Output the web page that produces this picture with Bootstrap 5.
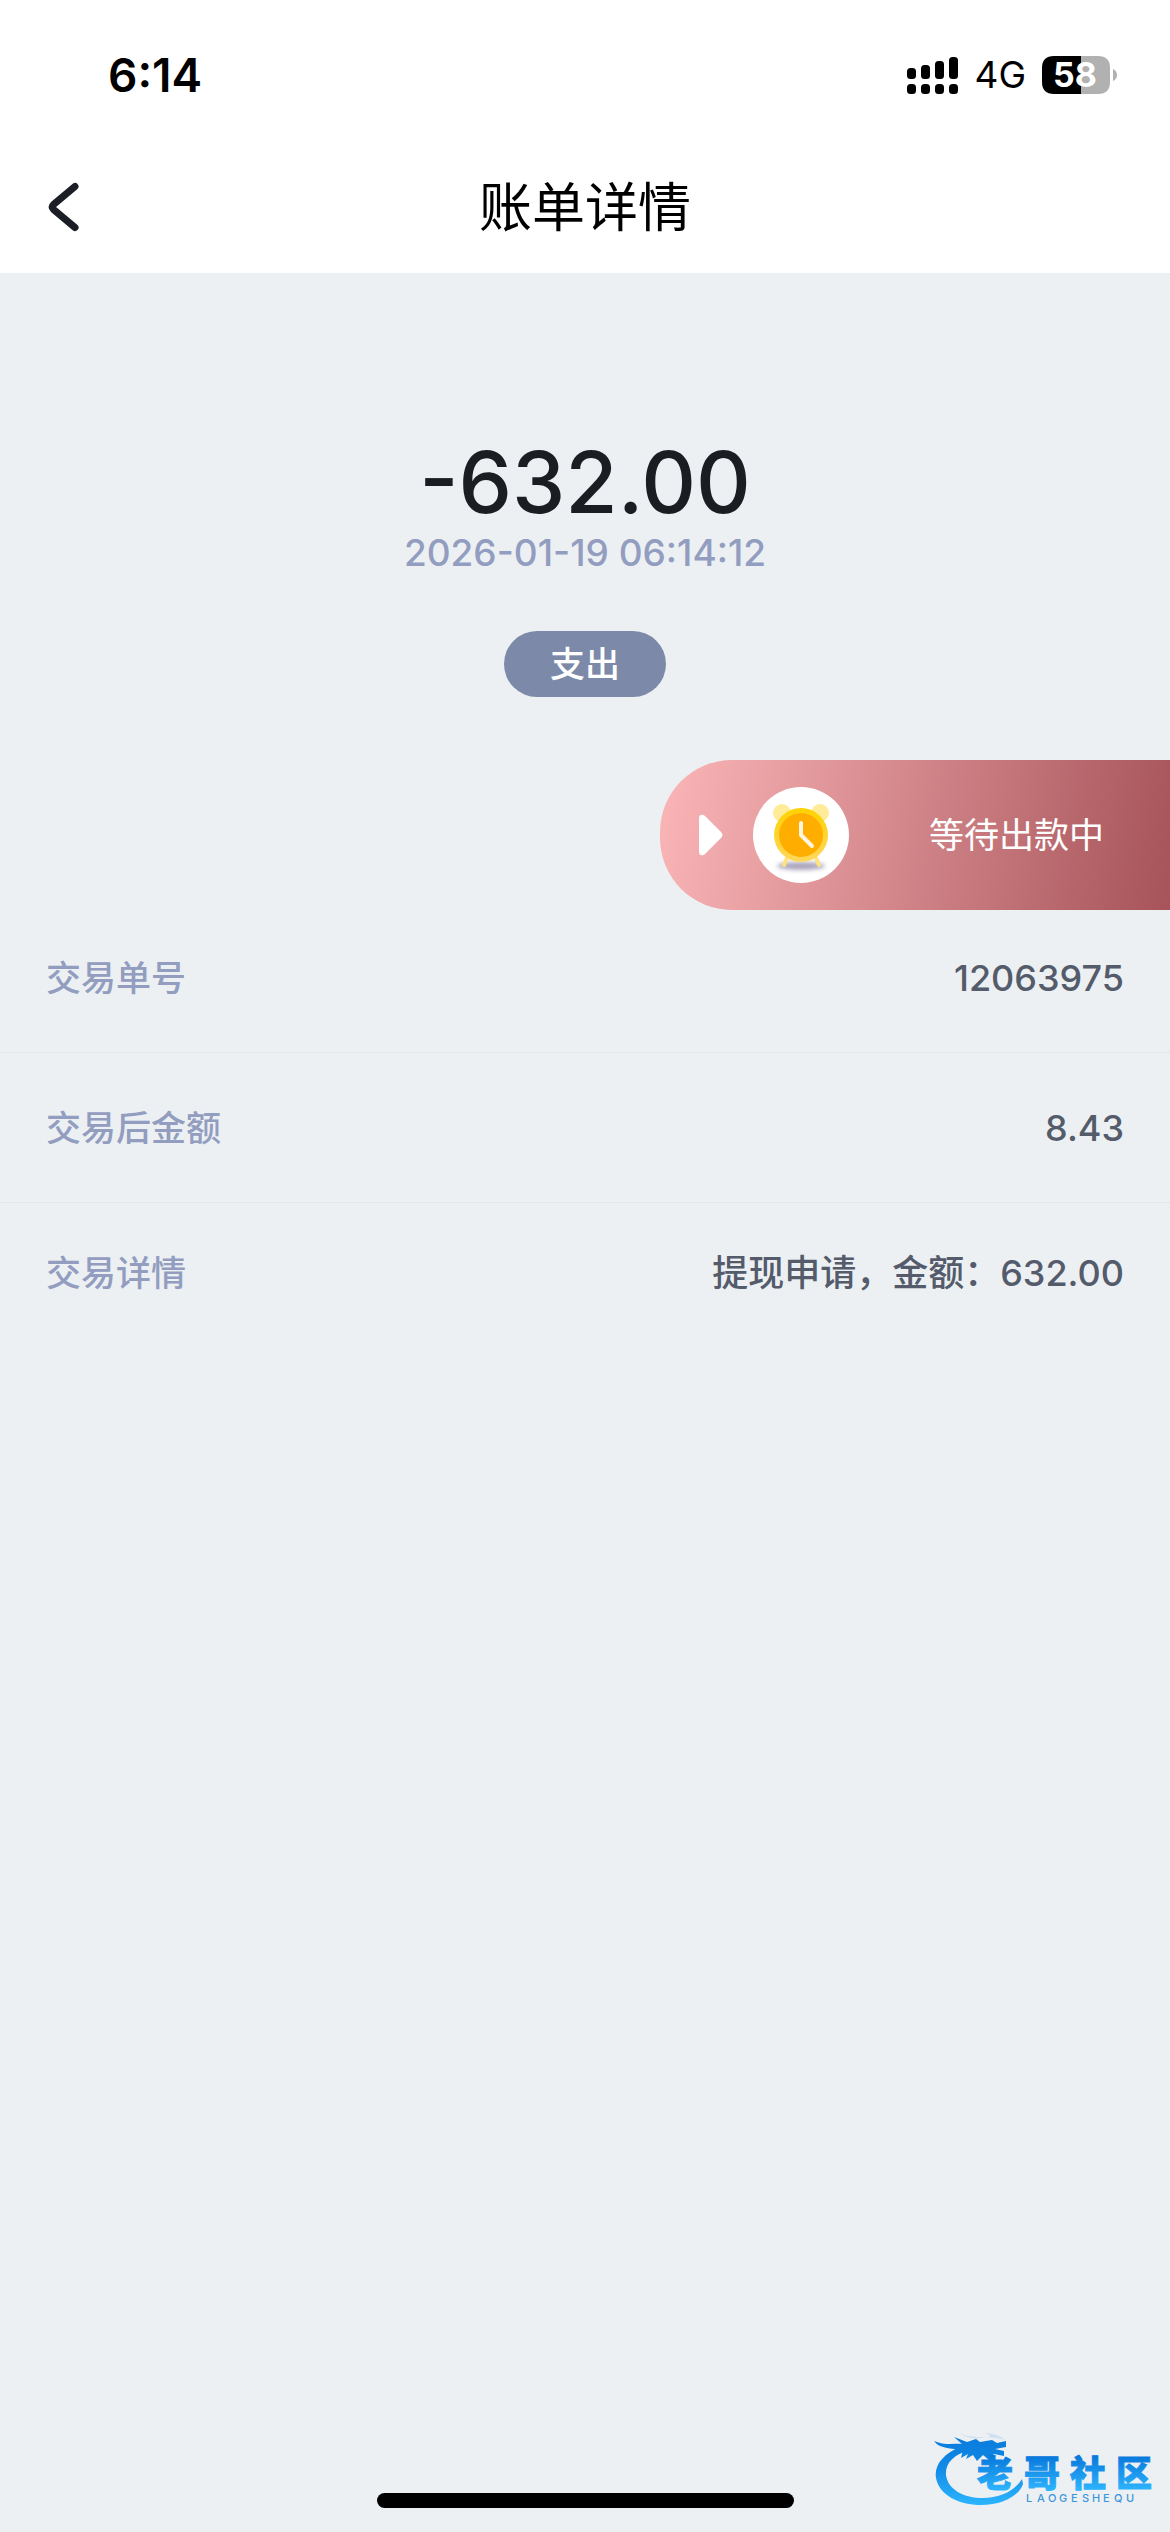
<!DOCTYPE html>
<html lang="zh-CN">
<head>
<meta charset="utf-8">
<meta name="viewport" content="width=device-width, initial-scale=1">
<title>账单详情</title>
<link href="https://cdn.jsdelivr.net/npm/bootstrap@5.3.0/dist/css/bootstrap.min.css" rel="stylesheet">
<style>
  body { font-family: Inter, "Noto Sans CJK SC", sans-serif; background: #ecf0f3; color: #1a1d21; font-size: 36px; line-height: 48px; }
  svg { display: block; flex: none; }
  .status-bar { height: 140px; padding: 0 52px 0 108px; color: #000; }
  .status-row { height: 150px; }
  .clock-time { font-size: 46px; font-weight: 600; }
  .carrier { font-size: 37px; }
  .title-bar { height: 133px; padding: 0 48px; }
  .title-bar h1 { font-size: 53px; line-height: 72px; font-weight: 400; color: #000; padding-top: 2px; }
  .title-bar a, .bar-side { width: 60px; }
  .summary { padding-top: 168px; }
  .amount { font-size: 85px; line-height: 84px; font-weight: 500; }
  .stamp { margin-top: 4px; color: #929dc0; font-size: 37px; font-weight: 500; }
  .kind { background: #7c89a8; width: 162px; height: 66px; margin-top: 54px; font-size: 35px; font-weight: 500; }
  .progress-tag { width: 510px; height: 150px; margin-top: 63px; margin-bottom: -7px; padding: 0 66px 0 39px; border-radius: 72px 0 0 72px; background: linear-gradient(100deg, #fbb6b8, #a65359); font-size: 35px; }
  .clock-disc { width: 96px; height: 96px; margin-left: 30px; }
  .entry { height: 150px; padding: 0 46px; border-bottom: 1px solid #e4e6e8; font-weight: 500; }
  .entry:last-child { height: 140px; border-bottom: 0; }
  .entry dt { color: #929dc0; font-size: 35px; font-weight: 500; }
  .entry dd { color: #545b6b; }
  .home-bar { width: 417px; height: 15px; margin-bottom: 24px; background: #000; }
  .watermark { right: 10px; bottom: 20px; }
</style>
</head>
<body class="d-flex flex-column min-vh-100 position-relative">
<header class="bg-white">
  <div class="status-bar">
    <div class="status-row d-flex align-items-center justify-content-between">
      <span class="clock-time">6:14</span>
      <div class="d-flex align-items-center">
        <svg width="51" height="37" viewBox="0 0 51 37" aria-label="信号">
          <rect x="0" y="11" width="9" height="11" rx="3.5"/><rect x="14" y="8" width="9" height="14" rx="3.5"/><rect x="28" y="4" width="9" height="18" rx="3.5"/><rect x="42" y="0" width="9" height="22" rx="3.5"/>
          <rect x="0" y="27" width="9" height="10" rx="3.5"/><rect x="14" y="27" width="9" height="10" rx="3.5"/><rect x="28" y="27" width="9" height="10" rx="3.5"/><rect x="42" y="27" width="9" height="10" rx="3.5"/>
        </svg>
        <span class="carrier ms-3 me-3">4G</span>
        <svg width="76" height="38" viewBox="0 0 76 38" aria-label="电量">
          <path d="M39 0H56Q68 0 68 12V26Q68 38 56 38H39Z" fill="#b1b1b1"/>
          <path d="M39 0H12Q0 0 0 12V26Q0 38 12 38H39Z"/>
          <path d="M71 13Q75 15 75 19T71 25Z" fill="#b1b1b1"/>
          <text x="33" y="31" text-anchor="middle" font-size="34" font-weight="700" fill="#fff">58</text>
        </svg>
      </div>
    </div>
  </div>
  <nav class="title-bar d-flex align-items-center justify-content-between" aria-label="导航">
    <a href="#" aria-label="返回"><svg width="31" height="50" viewBox="0 0 31 50" fill="none" stroke="#1b1e24" stroke-width="7" stroke-linecap="round" stroke-linejoin="round"><path d="M27 4.500L5.500 22.500Q3 25 5.500 27.500L27 45.500"/></svg></a>
    <h1 class="mb-0">账单详情</h1>
    <span class="bar-side"></span>
  </nav>
</header>
<main class="flex-grow-1">
  <section class="summary d-flex flex-column align-items-center">
    <div class="amount">-632.00</div>
    <time class="stamp" datetime="2026-01-19T06:14:12">2026-01-19 06:14:12</time>
    <span class="kind rounded-pill text-white d-flex align-items-center justify-content-center">支出</span>
  </section>
  <div class="progress-tag d-flex align-items-center ms-auto text-white">
    <svg width="24" height="42" viewBox="0 0 24 42" fill="#fff"><path d="M0 4C0 0 4 0 6 2L22 18Q25 21 22 24L6 40C4 42 0 42 0 38Z"/></svg>
    <span class="clock-disc bg-white rounded-circle d-flex">
      <svg width="96" height="96" viewBox="0 0 96 96">
        <defs>
          <linearGradient id="rim" x1="0" y1="0" x2="0" y2="1"><stop offset="0" stop-color="#ffd200"/><stop offset="1" stop-color="#ffd75c"/></linearGradient>
          <filter id="soft" x="-20%" y="-60%" width="140%" height="220%"><feGaussianBlur stdDeviation="2"/></filter>
        </defs>
        <ellipse cx="48" cy="79" rx="24" ry="4" fill="#aaa5bd" filter="url(#soft)"/>
        <circle cx="29" cy="26" r="9" fill="#ffeb98"/><circle cx="67" cy="26" r="9" fill="#ffeb98"/>
        <path d="M34 71l-3 7M63 71l3 7" stroke="#ffe27d" stroke-width="4" stroke-linecap="round"/>
        <circle cx="48" cy="48" r="27" fill="url(#rim)"/><circle cx="48" cy="48" r="22" fill="#ffae00"/>
        <path d="M48 36V48L59 59" fill="none" stroke="#fff6e2" stroke-width="4" stroke-linecap="round" stroke-linejoin="round"/>
      </svg>
    </span>
    <span class="ms-auto">等待出款中</span>
  </div>
  <dl class="m-0">
    <div class="entry d-flex align-items-center justify-content-between"><dt>交易单号</dt><dd class="m-0">12063975</dd></div>
    <div class="entry d-flex align-items-center justify-content-between"><dt>交易后金额</dt><dd class="m-0">8.43</dd></div>
    <div class="entry d-flex align-items-center justify-content-between"><dt>交易详情</dt><dd class="m-0">提现申请，金额：632.00</dd></div>
  </dl>
</main>
<footer>
  <div class="home-bar rounded-pill mx-auto"></div>
  <svg class="watermark position-absolute" width="230" height="84" viewBox="0 0 230 84" aria-label="老哥社区">
    <defs><linearGradient id="sea" gradientUnits="userSpaceOnUse" x1="0" y1="8" x2="0" y2="78"><stop offset="0" stop-color="#087bdc"/><stop offset=".45" stop-color="#128ae6"/><stop offset="1" stop-color="#2db6ff"/></linearGradient>
    <linearGradient id="word" gradientUnits="userSpaceOnUse" x1="0" y1="28" x2="0" y2="62"><stop offset="0" stop-color="#0878dc"/><stop offset="1" stop-color="#2db4fd"/></linearGradient></defs>
    <g fill="url(#sea)">
      <path d="M32 18C12 26 4 38 6 50C9 67 29 77 51 77C72 77 89 68 93 56L92 51C84 64 69 70 53 70C34 70 18 62 16 47C15 36 23 26 41 22Z"/>
      <path d="M4 13C16 18 25 15 32 16L24 9L37 14L46 11L50 14L62 12L67 15L76 13L76 19L65 21L74 23L74 28L64 26L59 32L53 27L47 33L43 27L36 31L38 26L31 30L33 22C21 20 9 21 4 13Z"/>
      <path d="M30 6Q42 12 51 10T75 12Q67 5 55 5Q65 10 53 9Q42 10 30 6Z" opacity=".13"/>
    </g>
    <text y="59" x="47 94 140 186" font-size="36" font-weight="900" fill="url(#word)" stroke="url(#word)">老哥社区</text>
    <text y="74" x="96 107 118 129 141 152 162 173 184 196" font-size="11" font-weight="500" fill="#3b96dc">LAOGESHEQU</text>
  </svg>
</footer>
<script src="https://cdn.jsdelivr.net/npm/bootstrap@5.3.0/dist/js/bootstrap.bundle.min.js"></script>
</body>
</html>
